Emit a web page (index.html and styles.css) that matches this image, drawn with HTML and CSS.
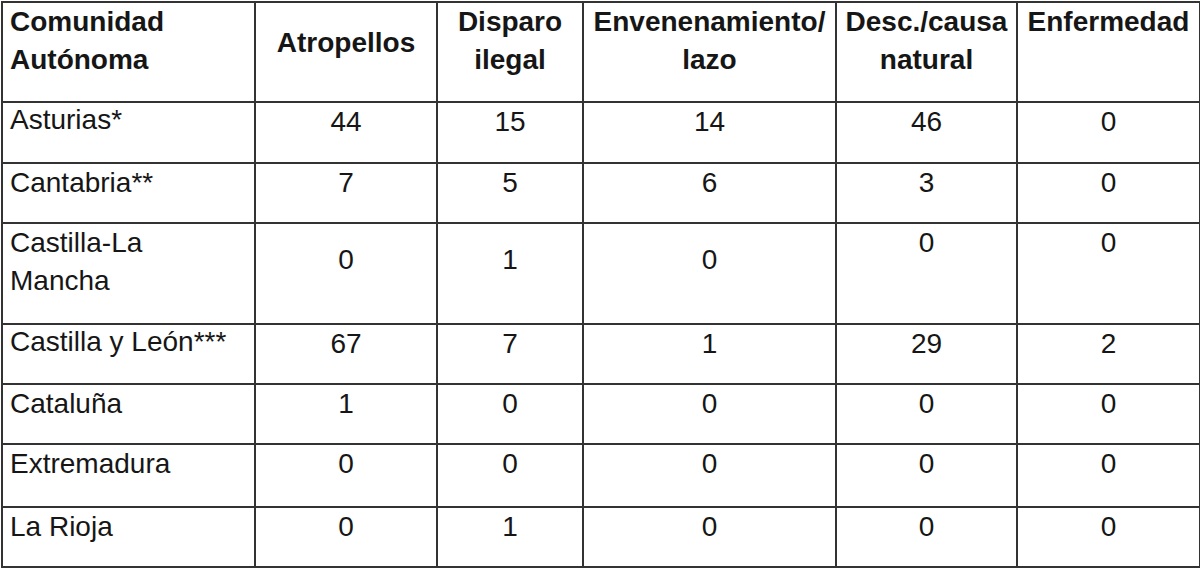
FILE: index.html
```html
<!DOCTYPE html>
<html lang="es">
<head>
<meta charset="utf-8">
<title>Tabla</title>
<link rel="stylesheet" href="styles.css">
</head>
<body>
<table class="tabla">
  <colgroup>
    <col class="c1"><col class="c2"><col class="c3"><col class="c4"><col class="c5"><col class="c6">
  </colgroup>
  <thead>
    <tr class="h100">
      <th class="left">Comunidad Autónoma</th>
      <th class="mid">Atropellos</th>
      <th>Disparo ilegal</th>
      <th>Envenenamiento/ lazo</th>
      <th>Desc./causa natural</th>
      <th>Enfermedad</th>
    </tr>
  </thead>
  <tbody>
    <tr class="h61"><td class="left"><div class="t">Asturias*</div></td><td>44</td><td>15</td><td>14</td><td>46</td><td>0</td></tr>
    <tr class="h60"><td class="left">Cantabria**</td><td>7</td><td>5</td><td>6</td><td>3</td><td>0</td></tr>
    <tr class="h101"><td class="left">Castilla-La Mancha</td><td class="tall">0</td><td class="tall">1</td><td class="tall">0</td><td>0</td><td>0</td></tr>
    <tr class="h60"><td class="left"><div class="t">Castilla y León***</div></td><td>67</td><td>7</td><td>1</td><td>29</td><td>2</td></tr>
    <tr class="h60"><td class="left">Cataluña</td><td>1</td><td>0</td><td>0</td><td>0</td><td>0</td></tr>
    <tr class="h63"><td class="left">Extremadura</td><td>0</td><td>0</td><td>0</td><td>0</td><td>0</td></tr>
    <tr class="h60"><td class="left">La Rioja</td><td>0</td><td>1</td><td>0</td><td>0</td><td>0</td></tr>
  </tbody>
</table>
</body>
</html>
```
FILE: styles.css
```css
html, body {
  margin: 0;
  padding: 0;
  background: #ffffff;
}
body {
  font-family: "Liberation Sans", Arial, sans-serif;
  color: #161616;
}
.tabla {
  border-collapse: collapse;
  table-layout: fixed;
  width: 1198px;
  margin: 1px 0 0 1px;
  font-size: 28px;
  line-height: 38px;
}
.c1 { width: 253px; }
.c2 { width: 182px; }
.c3 { width: 146px; }
.c4 { width: 253px; }
.c5 { width: 181px; }
.c6 { width: 183px; }
.tabla th,
.tabla td {
  border: 2px solid #333333;
  padding: 0 6px;
  text-align: center;
  vertical-align: top;
}
.tabla th {
  font-weight: bold;
}
.tabla td {
  font-weight: normal;
}
.tabla .left {
  text-align: left;
  padding-left: 7px;
  padding-right: 12px;
}
.tabla th.mid {
  vertical-align: middle;
  padding-bottom: 18px;
}
.tabla td.tall {
  padding-top: 17px;
}
.t {
  margin-top: -2px;
}
.h100 { height: 100px; }
.h61 { height: 61px; }
.h60 { height: 60px; }
.h63 { height: 63px; }
.h101 { height: 101px; }
```
